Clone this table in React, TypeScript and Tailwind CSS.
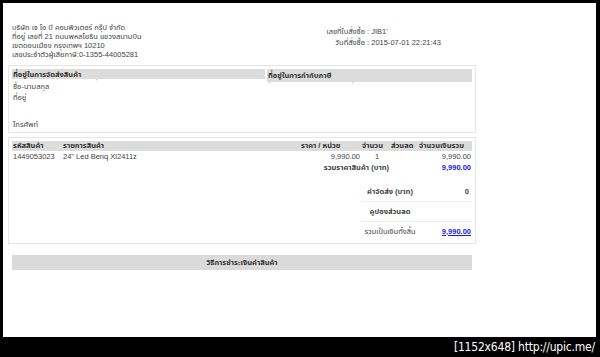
const font = { fontFamily: '"Liberation Sans", "Noto Sans Thai", "Noto Sans", Tahoma, sans-serif' };

export default function App() {
  return (
    <div className="w-[600px] h-[357px] bg-black flex flex-col overflow-hidden" style={font}>
      <div className="ml-[3px] mt-[3px] w-[593px] h-[334px] bg-white text-[7.5px] leading-[9px] text-[#444] px-[5px] pt-[19px]">
        {/* header */}
        <div className="flex">
          <div className="w-[300px] pl-[4px] pt-[1px]">
            <div>บริษัท เจ ไอ บี คอมพิวเตอร์ กรุ๊ป จำกัด</div>
            <div>ที่อยู่ เลขที่ 21 ถนนพหลโยธิน แขวงสนามบิน</div>
            <div>เขตดอนเมือง กรุงเทพฯ 10210</div>
            <div>เลขประจำตัวผู้เสียภาษี:0-1355-44005281</div>
          </div>
          <div className="pt-[5px] flex flex-col gap-[2px] whitespace-nowrap">
            <div className="flex">
              <div className="w-[57px] text-right">เลขที่ใบสั่งซื้อ</div>
              <div>&nbsp;: JIB1'</div>
            </div>
            <div className="flex">
              <div className="w-[57px] text-right">วันที่สั่งซื้อ</div>
              <div>&nbsp;: 2015-07-01 22:21:43</div>
            </div>
          </div>
        </div>

        {/* address box */}
        <div className="mt-[6px] w-[468px] h-[68px] border border-[#e6e6e6] p-[3px] flex gap-[2px]">
          <div className="w-[253px] flex flex-col">
            <div className="bg-[#dcdcdc] h-[13px] flex items-center px-[1px] font-bold text-[#333]">ที่อยู่ในการจัดส่งสินค้า</div>
            <div className="relative pt-[3px] pl-[1px]">
              <div>ชื่อ-นามสกุล</div>
              <div className="mt-[2px]">ที่อยู่</div>
              <div className="mt-[18px]">โทรศัพท์</div>
              <span className="absolute left-[84px] top-[-2px] text-[#aaa]">'</span>
            </div>
          </div>
          <div className="w-[205px] flex flex-col">
            <div className="bg-[#dcdcdc] h-[13px] flex items-center px-[1px] font-bold text-[#333]">ที่อยู่ในการกำกับภาษี</div>
            <div className="relative h-[10px]">
              <span className="absolute left-[2px] top-[-2px] text-[#aaa]">'</span>
              <span className="absolute left-[85px] top-[-2px] text-[#aaa]">'</span>
            </div>
          </div>
        </div>

        {/* product table */}
        <div className="mt-[4px] w-[468px] h-[107px] border border-[#e6e6e6] p-[3px] flex flex-col">
          <div className="bg-[#dcdcdc] h-[12px] flex items-center font-bold text-[#333]">
            <div className="w-[51px] pl-[1px]">รหัสสินค้า</div>
            <div className="w-[237px]">รายการสินค้า</div>
            <div className="w-[61px] pl-[1px]">ราคา / หน่วย</div>
            <div className="w-[30px] pl-[1px]">จำนวน</div>
            <div className="w-[28px]">ส่วนลด</div>
            <div className="flex-1">จำนวนเงินรวม</div>
          </div>
          <div className="h-[13px] flex items-center">
            <div className="w-[51px] pl-[1px]">1449053023</div>
            <div className="w-[237px]">24" Led Benq Xl2411z</div>
            <div className="w-[61px] text-right pr-[1px]">9,990.00</div>
            <div className="w-[30px] pl-[14px]">1</div>
            <div className="w-[28px]"></div>
            <div className="flex-1 text-right pr-[1px]">9,990.00</div>
          </div>
          <div className="h-[14px] flex items-center font-bold">
            <div className="w-[379px] text-right pr-[2px]">รวมราคาสินค้า (บาท)</div>
            <div className="flex-1 text-right pr-[1px] text-[#1a1adb]">9,990.00</div>
          </div>
          <div className="ml-[349px] mt-[9px] flex flex-col">
            <div className="h-[20px] flex items-center font-bold border-b border-[#ececec]">
              <div className="w-[58px] text-center">ค่าจัดส่ง (บาท)</div>
              <div className="flex-1 text-right pr-[3px]">0</div>
            </div>
            <div className="h-[20px] flex items-center font-bold border-b border-[#ececec]">
              <div className="w-[58px] text-center">คูปองส่วนลด</div>
              <div className="flex-1"></div>
            </div>
            <div className="h-[18px] flex items-center">
              <div className="w-[58px] text-center">รวมเป็นเงินทั้งสิ้น</div>
              <div className="flex-1 text-right pr-[1px] font-bold text-[#1a1adb] underline">9,990.00</div>
            </div>
          </div>
        </div>

        {/* payment */}
        <div className="mt-[11px] ml-[4px] w-[460px] h-[15px] bg-[#dadada] flex items-center justify-center font-bold text-[#333]">
          วิธีการชำระเงินค่าสินค้า
        </div>
      </div>
      <div className="flex-1 flex items-center justify-end pr-[5px]">
        <span className="text-white text-[12px] tracking-[-0.2px]" style={{ fontFamily: '"DejaVu Sans Condensed", "DejaVu Sans", sans-serif' }}>
          [1152x648] http://upic.me/
        </span>
      </div>
    </div>
  );
}
